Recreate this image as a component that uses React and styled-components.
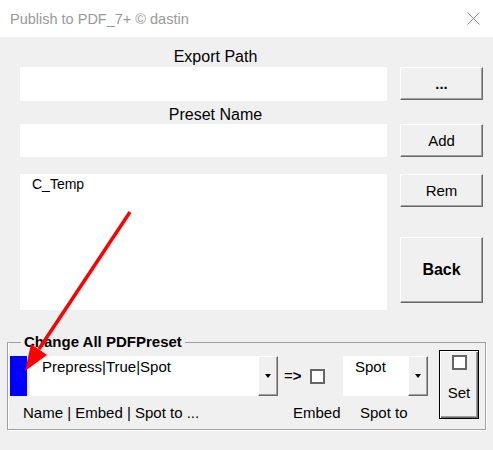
import React from 'react';
import styled, { createGlobalStyle } from 'styled-components';

const GlobalStyle = createGlobalStyle`
  html, body {
    margin: 0;
    padding: 0;
    background: #f0f0f0;
  }
  body {
    font-family: "Liberation Sans", Arial, sans-serif;
    color: #000;
  }
`;

const Window = styled.div`
  position: relative;
  width: 493px;
  height: 450px;
  background: #f0f0f0;
  overflow: hidden;
`;

const TitleBar = styled.div`
  height: 37px;
  background: #fff;
  display: flex;
  align-items: center;
  justify-content: space-between;
  padding: 0 13px 0 10px;
  box-sizing: border-box;
`;

const Title = styled.div`
  font-size: 14.5px;
  color: #999;
  white-space: nowrap;
`;

const TopGrid = styled.div`
  display: grid;
  grid-template-columns: 367px 83px;
  column-gap: 13px;
  align-items: start;
  padding: 11px 0 0 20px;
`;

const Caption = styled.div`
  grid-column: 1 / 3;
  height: ${p => p.$h}px;
  margin-top: ${p => p.$mt || 0}px;
  line-height: 18px;
  font-size: 16px;
  text-align: center;
  padding-right: 72px;
`;

const Field = styled.div`
  background: #fff;
  height: ${p => p.$h}px;
  margin-top: ${p => p.$mt || 0}px;
`;

const ListBox = styled(Field)`
  box-sizing: border-box;
  padding: 1px 12px;
  font-size: 14px;
  line-height: 18px;
`;

const raised = `
  box-sizing: border-box;
  background: #f0f0f0;
  border: 1px solid;
  border-color: #fff #696969 #696969 #fff;
  box-shadow: inset -1px -1px 0 #a0a0a0;
`;

const Button = styled.div`
  ${raised}
  height: ${p => p.$h}px;
  display: flex;
  align-items: center;
  justify-content: center;
  font-size: ${p => (p.$big ? 16 : 15)}px;
  font-weight: ${p => (p.$bold ? 700 : 400)};
`;

const ButtonStack = styled.div`
  display: flex;
  flex-direction: column;
  gap: 30px;
  margin-top: 17px;
`;

const Group = styled.fieldset`
  margin: 24px 0 0 7px;
  width: 479px;
  box-sizing: border-box;
  padding: 0 5px 7px 2px;
  border: 1px solid #a0a0a0;
  box-shadow: inset 1px 0 0 #fff, 1px 1px 0 #fff;
  min-width: 0;
`;

const Legend = styled.legend`
  font-size: 15px;
  font-weight: 700;
  line-height: 16px;
  padding: 0 3px;
  margin-left: 11px;
`;

const GroupRow = styled.div`
  display: flex;
  align-items: flex-start;
`;

const Controls = styled.div`
  display: grid;
  grid-template-columns: 17px 3px 228px 20px 32px 15px 18px 65px 20px;
  grid-template-rows: 40px 18px;
  row-gap: 8px;
  padding-top: 6px;
`;

const Swatch = styled.div`
  grid-column: 1;
  background: #0000ff;
`;

const ComboText = styled.div`
  grid-column: ${p => p.$col};
  background: #fff;
  padding: 2px 12px;
  font-size: 15px;
  line-height: 18px;
  white-space: nowrap;
`;

const DropButton = styled.div`
  ${raised}
  grid-column: ${p => p.$col};
  display: flex;
  align-items: center;
  justify-content: center;

  &::after {
    content: "";
    width: 0;
    height: 0;
    border-left: 3.5px solid transparent;
    border-right: 3.5px solid transparent;
    border-top: 4px solid #000;
  }
`;

const Arrow = styled.div`
  grid-column: 5;
  align-self: center;
  padding-left: 6px;
  font-size: 15px;
  line-height: 18px;
  white-space: nowrap;

  b {
    font-weight: 700;
  }
`;

const CheckBox = styled.div`
  grid-column: ${p => p.$col || 'auto'};
  align-self: center;
  width: 15px;
  height: 15px;
  box-sizing: border-box;
  border: 2px solid #666;
  background: #fff;
`;

const Hint = styled.div`
  grid-column: ${p => p.$col};
  grid-row: 2;
  padding-left: ${p => p.$pl}px;
  font-size: 15px;
  line-height: 18px;
  white-space: nowrap;
`;

const SetButton = styled.div`
  box-sizing: border-box;
  width: 40px;
  height: 69px;
  margin-left: 11px;
  background: #f0f0f0;
  border: 1px solid #000;
  box-shadow: inset 1px 1px 0 #fff, inset -1px -1px 0 #696969, inset -2px -2px 0 #a0a0a0;
  display: flex;
  flex-direction: column;
  align-items: center;
  padding-top: 4px;
  font-size: 15px;
  line-height: 18px;

  span {
    margin-top: 14px;
  }
`;

const Overlay = styled.svg`
  position: absolute;
  left: 0;
  top: 0;
  pointer-events: none;
`;

const CloseIcon = () => (
  <svg width="13" height="13" viewBox="0 0 13 13">
    <path d="M0.5 0.5 L12.5 12.5 M12.5 0.5 L0.5 12.5" stroke="#8a8a8a" strokeWidth="1" fill="none" />
  </svg>
);

export default function App() {
  return (
    <Window>
      <GlobalStyle />
      <TitleBar>
        <Title>Publish to PDF_7+ © dastin</Title>
        <CloseIcon />
      </TitleBar>

      <TopGrid>
        <Caption $h={19}>Export Path</Caption>
        <Field $h={34} />
        <Button $h={33} $bold>...</Button>

        <Caption $h={18} $mt={5}>Preset Name</Caption>
        <Field $h={33} />
        <Button $h={33}>Add</Button>

        <ListBox $h={136} $mt={17}>C_Temp</ListBox>
        <ButtonStack>
          <Button $h={33}>Rem</Button>
          <Button $h={66} $bold $big>Back</Button>
        </ButtonStack>
      </TopGrid>

      <Group>
        <Legend>Change All PDFPreset</Legend>
        <GroupRow>
          <Controls>
            <Swatch />
            <ComboText $col={3}>Prepress|True|Spot</ComboText>
            <DropButton $col={4} />
            <Arrow>=<b>&gt;</b></Arrow>
            <CheckBox $col={6} />
            <ComboText $col={8}>Spot</ComboText>
            <DropButton $col={9} />

            <Hint $col="1 / 5" $pl={13}>Name | Embed | Spot to ...</Hint>
            <Hint $col="5 / 8" $pl={15}>Embed</Hint>
            <Hint $col="8 / 10" $pl={17}>Spot to</Hint>
          </Controls>
          <SetButton>
            <CheckBox />
            <span>Set</span>
          </SetButton>
        </GroupRow>
      </Group>

      <Overlay width="493" height="450" viewBox="0 0 493 450">
        <line x1="130" y1="212" x2="39" y2="349" stroke="#ff0000" strokeWidth="3.5" />
        <polygon points="25,371 31,344 47,355" fill="#ff0000" />
      </Overlay>
    </Window>
  );
}
